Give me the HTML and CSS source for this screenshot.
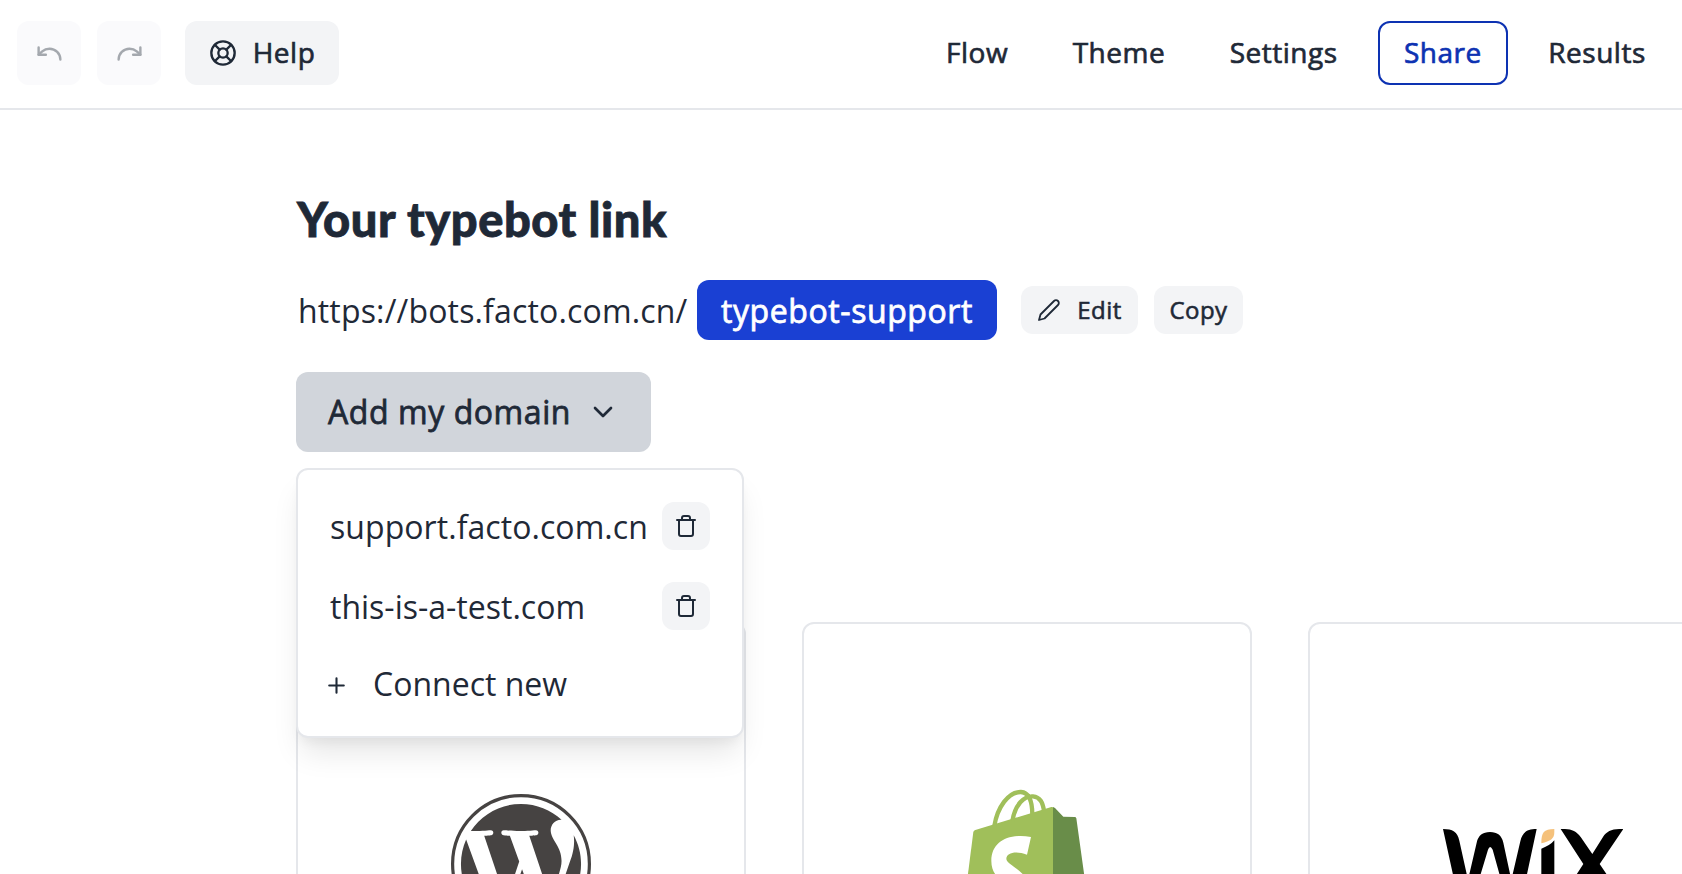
FILE: index.html
```html
<!DOCTYPE html>
<html lang="en">
<head>
<meta charset="utf-8">
<title>Share typebot</title>
<link rel="stylesheet" href="styles.css">
</head>
<body>
<header class="topbar">
  <div class="tools">
    <button class="btn icon-btn faded" aria-label="Undo"><svg class="icon s29" viewBox="0 0 24 24"><path d="M3 7v6h6"/><path d="M21 17a9 9 0 0 0-9-9 9 9 0 0 0-6 2.3L3 13"/></svg></button>
    <button class="btn icon-btn faded" aria-label="Redo"><svg class="icon s29" viewBox="0 0 24 24"><path d="M21 7v6h-6"/><path d="M3 17a9 9 0 0 1 9-9 9 9 0 0 1 6 2.3l3 2.7"/></svg></button>
    <button class="btn help"><svg class="icon s28" viewBox="0 0 24 24"><circle cx="12" cy="12" r="10"/><circle cx="12" cy="12" r="4"/><path d="M4.93 4.93l4.24 4.24M14.83 14.83l4.24 4.24M14.83 9.17l4.24-4.24M4.93 19.07l4.24-4.24"/></svg><span class="help-label">Help</span></button>
  </div>
  <nav class="nav">
    <a class="nav-link">Flow</a>
    <a class="nav-link">Theme</a>
    <a class="nav-link">Settings</a>
    <a class="nav-link active">Share</a>
    <a class="nav-link">Results</a>
  </nav>
</header>
<main class="content">
  <h1 class="title">Your typebot link</h1>
  <div class="link-row">
    <span class="origin">https://bots.facto.com.cn/</span>
    <span class="slug">typebot-support</span>
    <div class="actions">
      <button class="btn small"><svg class="icon s24 thin" viewBox="0 0 24 24"><path d="M17 3a2.828 2.828 0 1 1 4 4L7.5 20.5 2 22l1.5-5.5L17 3z"/></svg><span>Edit</span></button>
      <button class="btn small copy">Copy</button>
    </div>
  </div>
  <div class="dropdown">
    <button class="btn domain"><span>Add my domain</span><svg class="icon s32" viewBox="0 0 24 24"><path d="M6 9l6 6 6-6"/></svg></button>
    <div class="menu">
      <div class="item"><span class="host">support.facto.com.cn</span><button class="btn trash" aria-label="Remove"><svg class="icon s24" viewBox="0 0 24 24"><path d="M3 6h18M19 6v14a2 2 0 0 1-2 2H7a2 2 0 0 1-2-2V6m3 0V4a2 2 0 0 1 2-2h4a2 2 0 0 1 2 2v2"/></svg></button></div>
      <div class="item"><span>this-is-a-test.com</span><button class="btn trash" aria-label="Remove"><svg class="icon s24" viewBox="0 0 24 24"><path d="M3 6h18M19 6v14a2 2 0 0 1-2 2H7a2 2 0 0 1-2-2V6m3 0V4a2 2 0 0 1 2-2h4a2 2 0 0 1 2 2v2"/></svg></button></div>
      <div class="item connect"><svg class="icon plus" viewBox="0 0 24 24"><path d="M12 5v14M5 12h14"/></svg><span>Connect new</span></div>
    </div>
  </div>
  <div class="cards">
    <div class="card"><div class="logo">
      <svg width="140" height="140" viewBox="0 0 122.52 122.52" fill="#464342"><path d="m8.708 61.26c0 20.802 12.089 38.779 29.619 47.298l-25.069-68.686c-2.916 6.536-4.55 13.769-4.55 21.388z"/><path d="m96.74 58.608c0-6.495-2.333-10.993-4.334-14.494-2.664-4.329-5.161-7.995-5.161-12.324 0-4.831 3.664-9.328 8.825-9.328.233 0 .454.029.681.042-9.35-8.566-21.807-13.796-35.489-13.796-18.36 0-34.513 9.42-43.91 23.688 1.233.037 2.395.063 3.382.063 5.497 0 14.006-.667 14.006-.667 2.833-.167 3.167 3.994.337 4.329 0 0-2.847.335-6.015.501l19.138 56.925 11.501-34.493-8.188-22.434c-2.83-.166-5.511-.501-5.511-.501-2.832-.166-2.5-4.496.332-4.329 0 0 8.679.667 13.843.667 5.496 0 14.006-.667 14.006-.667 2.835-.167 3.168 3.994.337 4.329 0 0-2.853.335-6.015.501l18.992 56.494 5.242-17.517c2.272-7.269 4.001-12.49 4.001-16.989z"/><path d="m62.184 65.857-15.768 45.819c4.708 1.384 9.687 2.141 14.846 2.141 6.12 0 11.989-1.058 17.452-2.979-.141-.225-.269-.464-.374-.724z"/><path d="m107.376 36.046c.226 1.674.354 3.471.354 5.404 0 5.333-.996 11.328-3.996 18.824l-16.053 46.413c15.624-9.111 26.133-26.038 26.133-45.426.001-9.137-2.333-17.729-6.438-25.215z"/><circle cx="61.26" cy="61.26" r="59.86" fill="none" stroke="#464342" stroke-width="2.8"/></svg>
    </div></div>
    <div class="card"><div class="logo">
      <svg class="bag" width="124" height="148" viewBox="75 60 372 444"><path fill="#a0bf5a" d="M100 186Q101 182 106 180L334 111Q339 110 340 113V495L67 444z"/><path fill="#698d49" d="M339 111l6 3 25 26 34 1q4 0 5 4l46 330-116 20z"/><path fill="none" stroke="#a0bf5a" stroke-width="13" d="M163 168C172 112 205 65 243 66C270 68 277 97 277 135M217 153C225 104 252 77 279 79C301 81 308 98 312 122"/><path fill="#fff" d="M273 201l-12 53c-33-12-62-6-62 13 2 21 67 33 67 91 0 45-31 74-74 74-41 0-70-26-70-26l13-43s24 21 45 21c18 0 22-12 22-22 0-31-48-34-48-89 0-58 51-84 119-72z"/></svg>
    </div></div>
    <div class="card"><div class="logo">
      <svg width="180" height="70" viewBox="68 87 540 210"><path d="M68 87C97 87 111 95 117 122L143 240L169 128C174 106 187 96 209 96S244 106 249 128L273 240L300 124C306 97 319 87 349 87L304 297H277Q258 297 253 279L217 149Q209 133 203 149L164 279Q159 297 141 297H114zM363 146Q390 136 402 121V297Q363 297 363 260zM421 87C451 86 466 91 481 111L516 162L548 111C560 92 577 86 609 87L538 192L609 297C577 298 560 292 548 273L513 224L481 273C466 292 451 298 421 297L489 192z"/><path fill="#f5c17b" d="M402 87V96C402 118 390 122 363 130C363 97 370 87 402 87z"/></svg>
    </div></div>
  </div>
</main>
</body>
</html>
```

FILE: styles.css
```css
* { box-sizing: border-box; }
html, body { height: 100%; }
body {
  margin: 0;
  overflow: hidden;
  background: #fff;
  color: #1f2937;
  font-family: "Open Sans", "Noto Sans", sans-serif;
}
.topbar {
  height: 110px;
  padding: 0 12px 2px 17px;
  display: flex;
  align-items: center;
  justify-content: space-between;
  border-bottom: 2px solid #e5e7eb;
}
.tools { display: flex; gap: 16px; }
.btn {
  display: flex;
  align-items: center;
  justify-content: center;
  gap: 16px;
  border: 0;
  padding: 0;
  border-radius: 12px;
  background: #f3f4f6;
  color: inherit;
  font: 500 28px/1 "Open Sans", "Noto Sans", sans-serif;
  white-space: nowrap;
}
.btn, .nav-link, .slug {
  letter-spacing: .018em;
  -webkit-text-stroke: .024em currentColor;
}
.icon {
  flex: none;
  fill: none;
  stroke: currentColor;
  stroke-width: 2;
  stroke-linecap: round;
  stroke-linejoin: round;
}
.thin { stroke-width: 1.8; }
.s24 { width: 24px; height: 24px; }
.s28 { width: 28px; height: 28px; }
.s29 { width: 29px; height: 29px; }
.s32 { width: 32px; height: 32px; }
.icon-btn { width: 64px; height: 64px; background: #f3f4f9; }
.faded { opacity: .4; }
.help { width: 154px; height: 64px; margin-left: 8px; }
.help-label { padding-bottom: 2px; }
.nav { display: flex; gap: 16px; }
.nav-link {
  height: 64px;
  padding: 0 24.25px 2px;
  display: flex;
  align-items: center;
  border-radius: 12px;
  font-size: 28px;
  font-weight: 500;
}
.nav-link.active { color: #0d32b2; border: 2px solid #0d32b2; }
.content { padding: 80px 0 0 296px; }
.title {
  margin: 0;
  padding-left: 1px;
  height: 58px;
  font: 900 47px/58px Lato, sans-serif;
  letter-spacing: .55px;
  -webkit-text-stroke: .8px currentColor;
  white-space: nowrap;
}
.link-row {
  height: 60px;
  margin-top: 32px;
  display: flex;
  align-items: center;
}
.origin {
  width: 401px;
  padding-left: 2px;
  font-size: 32px;
  letter-spacing: .16px;
  white-space: nowrap;
}
.slug {
  width: 300px;
  height: 60px;
  display: flex;
  align-items: center;
  justify-content: center;
  border-radius: 12px;
  background: #1a40d3;
  color: #fff;
  font-size: 32px;
  font-weight: 500;
}
.actions { display: flex; gap: 16px; margin-left: 24px; }
.small { width: 117px; height: 48px; font-size: 24px; }
.copy { width: 89px; }
.dropdown { position: relative; margin-top: 32px; }
.domain { width: 355px; height: 80px; background: #d1d5db; font-size: 32px; }
.menu {
  position: absolute;
  top: 96px;
  left: 0;
  width: 448px;
  height: 270px;
  padding: 16px 0;
  border: 2px solid #e5e7eb;
  border-radius: 12px;
  background: #fff;
  box-shadow: 0 20px 30px -6px rgba(0, 0, 0, .1), 0 8px 12px -4px rgba(0, 0, 0, .05);
}
.item {
  height: 80px;
  padding: 0 32px;
  display: flex;
  align-items: center;
  justify-content: space-between;
  font-size: 32px;
  white-space: nowrap;
}
.host { letter-spacing: .06px; }
.trash { width: 48px; height: 48px; }
.connect { height: 74px; padding-left: 26px; justify-content: flex-start; gap: 24px; }
.plus { width: 25px; height: 25px; margin-top: 4px; }
.cards { display: flex; gap: 56px; margin-top: 170px; }
.card {
  flex: none;
  width: 450px;
  height: 450px;
  padding-top: 160px;
  border: 2px solid #e5e7eb;
  border-radius: 12px;
}
.logo { height: 160px; display: flex; align-items: center; justify-content: center; }
.bag { overflow: visible; }
```
